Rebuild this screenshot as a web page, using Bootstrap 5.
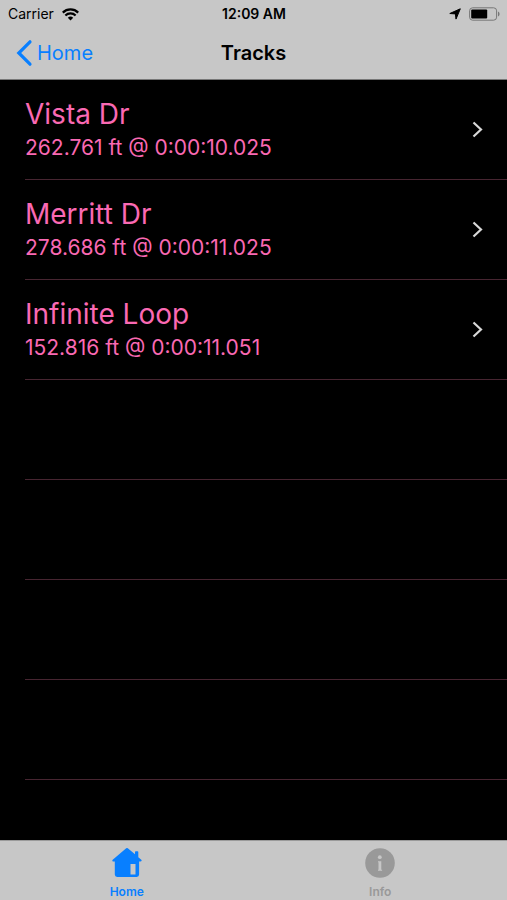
<!DOCTYPE html>
<html lang="en">
<head>
<meta charset="utf-8">
<meta name="viewport" content="width=device-width, initial-scale=1">
<title>Tracks</title>
<link rel="stylesheet" href="https://cdn.jsdelivr.net/npm/bootstrap@5.3.0/dist/css/bootstrap.min.css">
<style>
  body { font-family: Inter, "Liberation Sans", sans-serif; background: #000; color: #000; }
  svg { display: block; flex: none; }
  .bar-bg { background: #c7c7c7; }
  .status-bar { height: 27px; font-size: 14px; line-height: 20px; padding: 1px 7px 0 8px; }
  .title-bar { height: 53px; padding: 0 16px; border-bottom: 1px solid #777; font-size: 20px; line-height: 24px; }
  .title-bar h1 { font-size: 20px; line-height: 24px; }
  .ios-blue, .ios-blue:hover { color: #087fff; }
  .track-list { padding-left: 25px; }
  .track-row { height: 100px; border-bottom: 1px solid #472531; }
  .track-link, .track-link:hover { color: #fa69b3; padding-right: 24px; }
  .track-name { font-size: 28px; line-height: 36px; }
  .track-time { font-size: 21px; line-height: 32px; }
  .tab-bar { height: 60px; border-top: 1px solid #9a9a9a; font-size: 12px; line-height: 14px; }
  .tab-item { gap: 6px; padding-bottom: 1px; }
  .tab-off, .tab-off:hover { color: #999; }
</style>
<script src="https://cdn.jsdelivr.net/npm/bootstrap@5.3.0/dist/js/bootstrap.bundle.min.js" defer></script>
</head>
<body class="d-flex flex-column min-vh-100">
<header class="bar-bg">
  <div class="status-bar row g-0 align-items-center">
    <div class="col d-flex align-items-center gap-2">
      <span>Carrier</span>
      <svg width="17" height="13" viewBox="0 0 17 13" fill="none" stroke="#000" stroke-width="2.2" aria-hidden="true"><path d="M.8 4.6a11 11 0 0 1 15.4 0M3.4 7.5a7.2 7.2 0 0 1 10.2 0"/><path d="M8.5 12.6 5.8 9.8a4 4 0 0 1 5.4 0z" fill="#000" stroke="none"/></svg>
    </div>
    <div class="col-auto fw-semibold">12:09 AM</div>
    <div class="col d-flex align-items-center justify-content-end gap-2">
      <svg width="12" height="12" viewBox="0 0 12 12" stroke="#000" stroke-linejoin="round" aria-hidden="true"><path d="M11.300.8 7 11.100 6.400 5.900.8 5.500z"/></svg>
      <svg width="31" height="14" viewBox="0 0 31 14" aria-hidden="true"><rect x=".6" y=".8" width="27" height="12.4" rx="3" fill="none" stroke="#777"/><rect x="2.2" y="2.5" width="16" height="9" rx="1"/><path d="M29 4.5q1.6.8 1.6 2.5T29 9.5z" fill="#777"/></svg>
    </div>
  </div>
  <nav class="title-bar row g-0 align-items-center" aria-label="Navigation">
    <div class="col d-flex">
      <a href="#" class="ios-blue text-decoration-none d-flex align-items-center gap-1">
        <svg width="17" height="28" viewBox="0 0 17 28" fill="none" stroke="currentColor" stroke-width="3.2" stroke-linecap="round" aria-hidden="true"><path d="M14 2.800 2.800 14 14 25.200"/></svg>
        <span>Home</span>
      </a>
    </div>
    <h1 class="col-auto fw-semibold m-0">Tracks</h1>
    <div class="col"></div>
  </nav>
</header>
<main class="flex-grow-1">
  <ul class="track-list list-unstyled m-0">
    <li class="track-row"><a href="#" class="track-link h-100 d-flex align-items-center justify-content-between text-decoration-none"><span><span class="track-name d-block">Vista Dr</span><span class="track-time d-block">262.761 ft @ 0:00:10.025</span></span><svg width="11" height="18" viewBox="0 0 11 18" fill="none" stroke="#d8d8d8" stroke-width="2.2" aria-hidden="true"><path d="m1.500 1.500 7.500 7-7.500 7"/></svg></a></li>
    <li class="track-row"><a href="#" class="track-link h-100 d-flex align-items-center justify-content-between text-decoration-none"><span><span class="track-name d-block">Merritt Dr</span><span class="track-time d-block">278.686 ft @ 0:00:11.025</span></span><svg width="11" height="18" viewBox="0 0 11 18" fill="none" stroke="#d8d8d8" stroke-width="2.2" aria-hidden="true"><path d="m1.500 1.500 7.500 7-7.500 7"/></svg></a></li>
    <li class="track-row"><a href="#" class="track-link h-100 d-flex align-items-center justify-content-between text-decoration-none"><span><span class="track-name d-block">Infinite Loop</span><span class="track-time d-block">152.816 ft @ 0:00:11.051</span></span><svg width="11" height="18" viewBox="0 0 11 18" fill="none" stroke="#d8d8d8" stroke-width="2.2" aria-hidden="true"><path d="m1.500 1.500 7.500 7-7.500 7"/></svg></a></li>
    <li class="track-row"></li>
    <li class="track-row"></li>
    <li class="track-row"></li>
    <li class="track-row"></li>
  </ul>
</main>
<nav class="tab-bar bar-bg row g-0 fw-semibold text-center" aria-label="Tabs">
  <a href="#" class="tab-item col ios-blue text-decoration-none d-flex flex-column align-items-center justify-content-end" aria-current="page">
    <svg width="30" height="32" viewBox="0 0 30 32" fill="currentColor" aria-hidden="true"><path fill-rule="evenodd" d="M14.200 1.300q.8-.7 1.600 0l7.200 6V5q0-.8.8-.8h1.700q.8 0 .8.800v5.200l3 2.500q.6.600.2 1.300-.3.400-1.200.400h-1.200v13.200q0 2.400-2.400 2.400H5.200q-2.400 0-2.400-2.400V14.400H1.600q-.9 0-1.200-.5-.3-.7.300-1.200zM18.500 17v10.500h5V17z"/></svg>
    <span>Home</span>
  </a>
  <a href="#" class="tab-item col tab-off text-decoration-none d-flex flex-column align-items-center justify-content-end">
    <svg width="30" height="32" viewBox="0 0 30 32" aria-hidden="true"><circle cx="15" cy="16" r="14.8" fill="currentColor"/><circle cx="14.800" cy="10.200" r="1.900" fill="#c7c7c7"/><path d="M13 14.300h3.300v8.400h.8v1H13v-1h.500v-7.400H13z" fill="#c7c7c7"/></svg>
    <span>Info</span>
  </a>
</nav>
</body>
</html>
